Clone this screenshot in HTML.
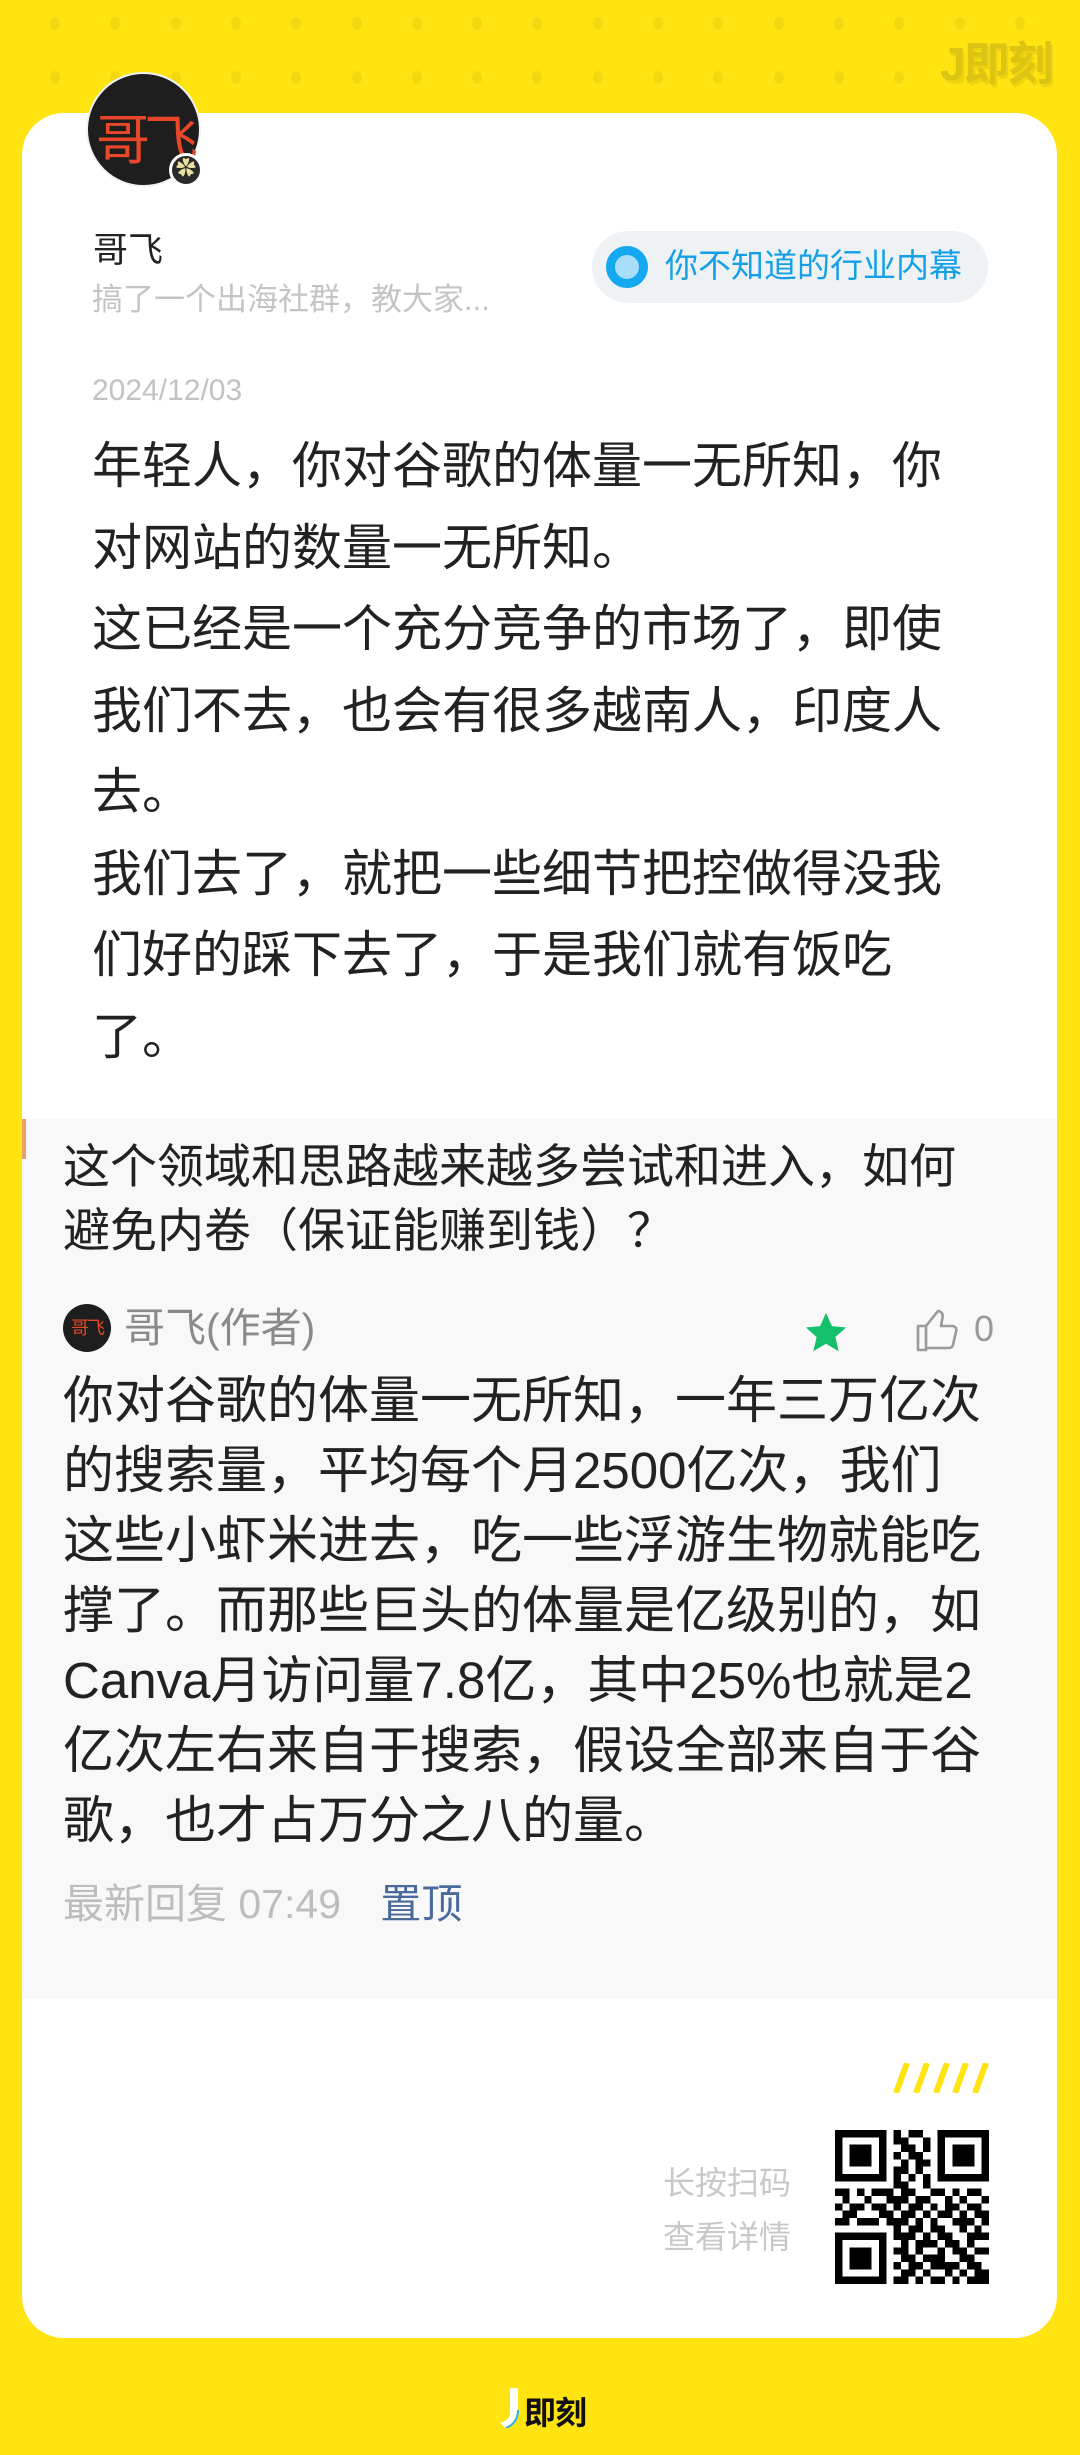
<!DOCTYPE html>
<html><head><meta charset="utf-8"><style>
*{margin:0;padding:0;box-sizing:border-box}
body{width:1080px;height:2455px;background:#FFE411;position:relative;overflow:hidden;font-family:"Liberation Sans","Noto Sans CJK SC",sans-serif}
.a{position:absolute;white-space:nowrap}
.dot{position:absolute;width:10px;height:13px;border-radius:50%;background:#f3d810}
</style></head><body>
<div id="dots"></div>
<div class="a" style="left:940px;top:28px;font-size:46px;color:#dcc512;font-weight:bold;letter-spacing:-2px;text-shadow:2px 3px 0 #eed410">J即刻</div>

<div class="a" style="left:22px;top:113px;width:1035px;height:2225px;background:#fff;border-radius:42px;overflow:hidden">
  <div class="a" style="left:0;top:1006px;width:1035px;height:880px;background:#f8f8f8"></div>
  <div class="a" style="left:0;top:1006px;width:4px;height:40px;background:#e8a070"></div>
</div>

<!-- avatar -->
<div class="a" style="left:86px;top:72px;width:115px;height:115px;border-radius:50%;background:#1e1e1e;border:2px solid #f2f2f2"></div>
<div class="a" style="left:96px;top:96px;font-size:54px;color:#e8472a;letter-spacing:-6px">哥飞</div>
<div class="a" style="left:169px;top:153px;width:34px;height:34px;border-radius:50%;background:#2a2a2a;border:3px solid #fff;text-align:center;line-height:26px;font-size:20px;color:#e8e0a0">✿</div>

<div class="a" style="left:93px;top:222px;font-size:35px;color:#222">哥飞</div>
<div class="a" style="left:92px;top:274px;font-size:31px;color:#c4c4c4">搞了一个出海社群，教大家...</div>

<div class="a" style="left:592px;top:231px;width:396px;height:72px;border-radius:36px;background:#eef2f5"></div>
<div class="a" style="left:606px;top:246px;width:42px;height:42px;border-radius:50%;background:#a9def9;border:9px solid #14a8f0"></div>
<div class="a" style="left:665px;top:246px;font-size:33px;line-height:40px;color:#14a0e6">你不知道的行业内幕</div>

<div class="a" style="left:92px;top:374px;font-size:30px;color:#c2c2c2">2024/12/03</div>

<div class="a" style="left:92px;top:426px;font-size:50px;line-height:81.5px;color:#222">年轻人，你对谷歌的体量一无所知，你<br>对网站的数量一无所知。<br>这已经是一个充分竞争的市场了，即使<br>我们不去，也会有很多越南人，印度人<br>去。<br>我们去了，就把一些细节把控做得没我<br>们好的踩下去了，于是我们就有饭吃<br>了。</div>

<div class="a" style="left:63px;top:1135px;font-size:47px;line-height:64px;color:#222">这个领域和思路越来越多尝试和进入，如何<br>避免内卷（保证能赚到钱）？</div>

<div class="a" style="left:63px;top:1304px;width:48px;height:48px;border-radius:50%;background:#1e1e1e;color:#e8472a;font-size:18px;line-height:48px;text-align:center;letter-spacing:-2px">哥飞</div>
<div class="a" style="left:124px;top:1304px;font-size:41px;line-height:48px;color:#8a8a8a">哥飞(作者)</div>
<svg class="a" style="left:803px;top:1310px" width="46" height="46" viewBox="0 0 24 24"><path d="M12 1.5l3.1 6.9 7.4.7-5.6 5 1.7 7.4L12 17.6l-6.6 3.9 1.7-7.4-5.6-5 7.4-.7z" fill="#14c06a"/></svg>
<svg class="a" style="left:914px;top:1306px" width="48" height="48" viewBox="0 0 24 24"><path d="M2 10h4v12H2zM6 21h11.5a2 2 0 0 0 2-1.6l1.6-7A2 2 0 0 0 19 10h-5.5l.8-4.5A2.5 2.5 0 0 0 12 2.5L6 10" fill="none" stroke="#9a9a9a" stroke-width="1.3" stroke-linejoin="round"/></svg>
<div class="a" style="left:974px;top:1308px;font-size:36px;color:#999">0</div>

<div class="a" style="left:63px;top:1366px;font-size:51px;line-height:70px;color:#222">你对谷歌的体量一无所知，一年三万亿次<br>的搜索量，平均每个月2500亿次，我们<br>这些小虾米进去，吃一些浮游生物就能吃<br>撑了。而那些巨头的体量是亿级别的，如<br>Canva月访问量7.8亿，其中25%也就是2<br>亿次左右来自于搜索，假设全部来自于谷<br>歌，也才占万分之八的量。</div>

<div class="a" style="left:63px;top:1880px;font-size:41px;line-height:48px;color:#bdbdbd">最新回复 07:49 <span style="color:#4a6a9a;margin-left:28px">置顶</span></div>

<svg class="a" style="left:893px;top:2063px" width="96" height="30" viewBox="0 0 96 30"><g stroke="#FFE411" stroke-width="6"><path d="M3 30L14 0M23 30L34 0M43 30L54 0M62 30L73 0M82 30L93 0"/></g></svg>
<div class="a" style="left:663px;top:2156px;font-size:32px;line-height:54px;color:#c8c8c8">长按扫码<br>查看详情</div>
<svg id="qr" class="a" style="left:835px;top:2130px" width="154" height="154" viewBox="0 0 21 21" shape-rendering="crispEdges"></svg>

<div class="a" style="left:500px;top:2388px;width:18px;height:40px;">
<svg width="20" height="40" viewBox="0 0 20 40"><path d="M10 0h8v26q0 10-12 14l-6-5q10-3 10-10z" fill="#fff"/><path d="M18 22q0 13-12 18" stroke="#2ab0ee" stroke-width="2" fill="none"/></svg></div>
<div class="a" style="left:524px;top:2388px;font-size:32px;font-weight:bold;color:#111;letter-spacing:-1px">即刻</div>

<script>
var d=document.getElementById('dots'),h='';
[23,77].forEach(function(y){for(var x=55;x<1040;x+=60.3){h+='<div class="dot" style="left:'+(x-5)+'px;top:'+(y-6)+'px"></div>';}});
d.innerHTML=h;
var rows=["111111101011001111111","100000101100101000001","101110100110101011101","101110101011001011101","101110100101101011101","100000101101001000001","111111101010101111111","000000001100100000000","110101110110011010110","010010011101100101001","101101101011010110110","011000110110101101011","110111011101010011101","000000001011011001010","111111101110101100111","100000100101110110100","101110101101001011011","101110100110111001100","101110101011011110110","100000100110100101011","111111101101011010111"];
var s='';rows.forEach(function(r,y){for(var x=0;x<21;x++)if(r[x]=='1')s+='<rect x="'+x+'" y="'+y+'" width="1" height="1"/>';});
document.getElementById('qr').innerHTML=s;
</script>
</body></html>
